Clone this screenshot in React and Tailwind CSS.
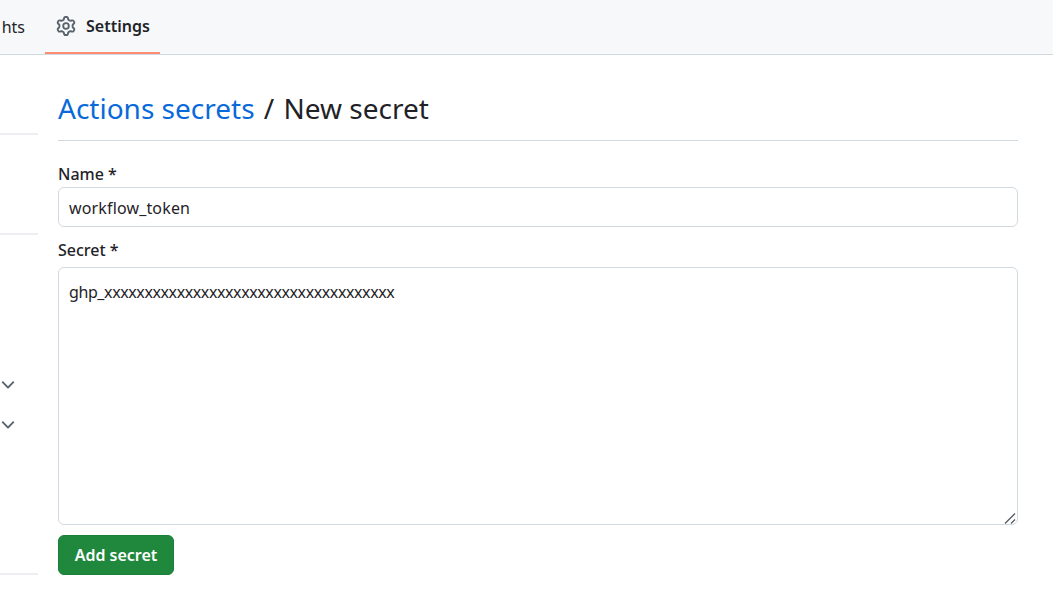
import React from 'react';

const font = "[font-family:'Noto_Sans','Open_Sans',sans-serif]";

function GearIcon() {
    return (
        <svg width="20" height="20" viewBox="0 0 16 16" fill="#59636e" className="shrink-0">
            <path d="M8 0a8.2 8.2 0 0 1 .701.031C9.444.095 9.99.645 10.16 1.29l.288 1.107c.018.066.079.158.212.224.231.114.454.243.668.386.123.082.233.09.299.071l1.103-.303c.644-.176 1.392.021 1.82.63.27.385.506.792.704 1.218.315.675.111 1.422-.364 1.891l-.814.806c-.049.048-.098.147-.088.294.016.257.016.515 0 .772-.01.147.038.246.088.294l.814.806c.475.469.679 1.216.364 1.891a7.977 7.977 0 0 1-.704 1.217c-.428.61-1.176.807-1.82.63l-1.102-.302c-.067-.019-.177-.011-.3.071a5.909 5.909 0 0 1-.668.386c-.133.066-.194.158-.211.224l-.29 1.106c-.168.646-.715 1.196-1.458 1.26a8.006 8.006 0 0 1-1.402 0c-.743-.064-1.289-.614-1.458-1.26l-.289-1.106c-.018-.066-.079-.158-.212-.224a5.738 5.738 0 0 1-.668-.386c-.123-.082-.233-.09-.299-.071l-1.103.303c-.644.176-1.392-.021-1.82-.63a8.12 8.12 0 0 1-.704-1.218c-.315-.675-.111-1.422.363-1.891l.815-.806c.05-.048.098-.147.088-.294a6.214 6.214 0 0 1 0-.772c.01-.147-.038-.246-.088-.294l-.815-.806C.635 6.045.431 5.298.746 4.623a7.92 7.92 0 0 1 .704-1.217c.428-.61 1.176-.807 1.82-.63l1.102.302c.067.019.177.011.3-.071.214-.143.437-.272.668-.386.133-.066.194-.158.211-.224l.29-1.106C6.009.645 6.556.095 7.299.03 7.53.01 7.764 0 8 0Zm-.571 1.525c-.036.003-.108.036-.137.146l-.289 1.105c-.147.561-.549.967-.998 1.189-.173.086-.34.183-.5.29-.417.278-.97.423-1.529.27l-1.103-.303c-.109-.03-.175.016-.195.045-.22.312-.412.644-.573.99-.014.031-.021.11.059.19l.815.806c.411.406.562.957.53 1.456a4.709 4.709 0 0 0 0 .582c.032.499-.119 1.05-.53 1.456l-.815.806c-.081.08-.073.159-.059.19.162.346.353.677.573.989.02.03.085.076.195.046l1.102-.303c.56-.153 1.113-.008 1.53.27.161.107.328.204.501.29.447.222.85.629.997 1.189l.289 1.105c.029.109.101.143.137.146a6.6 6.6 0 0 0 1.142 0c.036-.003.108-.036.137-.146l.289-1.105c.147-.561.549-.967.998-1.189.173-.086.34-.183.5-.29.417-.278.97-.423 1.529-.27l1.103.303c.109.029.175-.016.195-.045.22-.313.411-.644.573-.99.014-.031.021-.11-.059-.19l-.815-.806c-.411-.406-.562-.957-.53-1.456a4.709 4.709 0 0 0 0-.582c-.032-.499.119-1.05.53-1.456l.815-.806c.081-.08.073-.159.059-.19a6.464 6.464 0 0 0-.573-.989c-.02-.03-.085-.076-.195-.046l-1.102.303c-.56.153-1.113.008-1.53-.27a4.44 4.44 0 0 0-.501-.29c-.447-.222-.85-.629-.997-1.189l-.289-1.105c-.029-.11-.101-.143-.137-.146a6.6 6.6 0 0 0-1.142 0ZM11 8a3 3 0 1 1-6 0 3 3 0 0 1 6 0ZM9.5 8a1.5 1.5 0 1 0-3.001.001A1.5 1.5 0 0 0 9.5 8Z" />
        </svg>
    );
}

function ChevronIcon() {
    return (
        <svg width="20" height="20" viewBox="0 0 16 16" fill="#59636e" className="-ml-[2px]">
            <path d="M12.78 5.22a.749.749 0 0 1 0 1.06l-4.25 4.25a.749.749 0 0 1-1.06 0L3.22 6.28a.749.749 0 1 1 1.06-1.06L8 8.939l3.72-3.719a.749.749 0 0 1 1.06 0Z" />
        </svg>
    );
}

function ResizeHandle() {
    return (
        <svg width="12" height="12" viewBox="0 0 12 12" className="absolute right-[2px] bottom-[1px] pointer-events-none" stroke="#555b63" strokeWidth="1.3">
            <path d="M1 11.5 11 1.5M7 11.5l4-4" />
        </svg>
    );
}

function TopNav() {
    return (
        <div className="h-[55px] bg-[#f6f8fa] border-b border-[#d1d9e0] flex items-stretch overflow-hidden">
            <span className="w-[45px] pl-[1px] flex items-center justify-end pr-5 text-[16px] text-[#1f2328] overflow-hidden whitespace-nowrap">
                hts
            </span>
            <div className="w-[115px] h-[55px] border-b-[3px] border-[#fd8c73] flex items-center gap-[10px] pl-[11px] pb-[1px]">
                <GearIcon />
                <span className="text-[16px] font-semibold text-[#1f2328]">Settings</span>
            </div>
        </div>
    );
}

function Sidebar() {
    return (
        <div className="w-[38px] shrink-0 flex flex-col overflow-hidden">
            <div className="h-[80px] border-b-2 border-[#eceef1]" />
            <div className="h-[100px] border-b-2 border-[#eceef1]" />
            <div className="h-[340px] border-b-2 border-[#eceef1] pt-[130px]">
                <div className="h-10 flex items-center"><ChevronIcon /></div>
                <div className="h-10 flex items-center"><ChevronIcon /></div>
            </div>
        </div>
    );
}

export default function App() {
    return (
        <div className={`h-[600px] w-[1053px] bg-white overflow-hidden ${font}`}>
            <TopNav />
            <div className="flex">
                <Sidebar />
                <main className="ml-5 w-[960px]">
                    <h1 className="mt-[32px] h-[54px] border-b border-[#d1d9e0] text-[28px] leading-[42px] text-[#1f2328]">
                        <a className="text-[#0969da]" href="#">Actions secrets</a>
                        <span className="mx-[2px]"> / </span>New secret
                    </h1>
                    <form>
                        <label className="block mt-[21px] h-[24px] text-[16px] leading-[24px] font-medium text-[#1f2328]">Name *</label>
                        <input
                            type="text"
                            defaultValue="workflow_token"
                            className="block mt-[1px] w-full h-10 px-[10px] pt-[2px] border border-[#d1d9e0] rounded-md text-[16px] tracking-[0.15px] text-[#1f2328] outline-none"
                        />
                        <label className="block mt-[11px] h-[24px] text-[16px] leading-[24px] font-medium text-[#1f2328]">Secret *</label>
                        <div className="relative mt-[5px]">
                            <textarea
                                defaultValue="ghp_xxxxxxxxxxxxxxxxxxxxxxxxxxxxxxxxxxxx"
                                className="block w-full h-[258px] px-[10px] py-[12px] border border-[#d1d9e0] rounded-md text-[16px] leading-[24px] tracking-[-0.4px] text-[#1f2328] outline-none resize-none"
                            />
                            <ResizeHandle />
                        </div>
                        <button
                            type="button"
                            className="block mt-[10px] w-[116px] h-10 rounded-md bg-[#1f883d] border border-[#1a7f37] text-white text-[16px] font-semibold"
                        >
                            Add secret
                        </button>
                    </form>
                </main>
            </div>
        </div>
    );
}
